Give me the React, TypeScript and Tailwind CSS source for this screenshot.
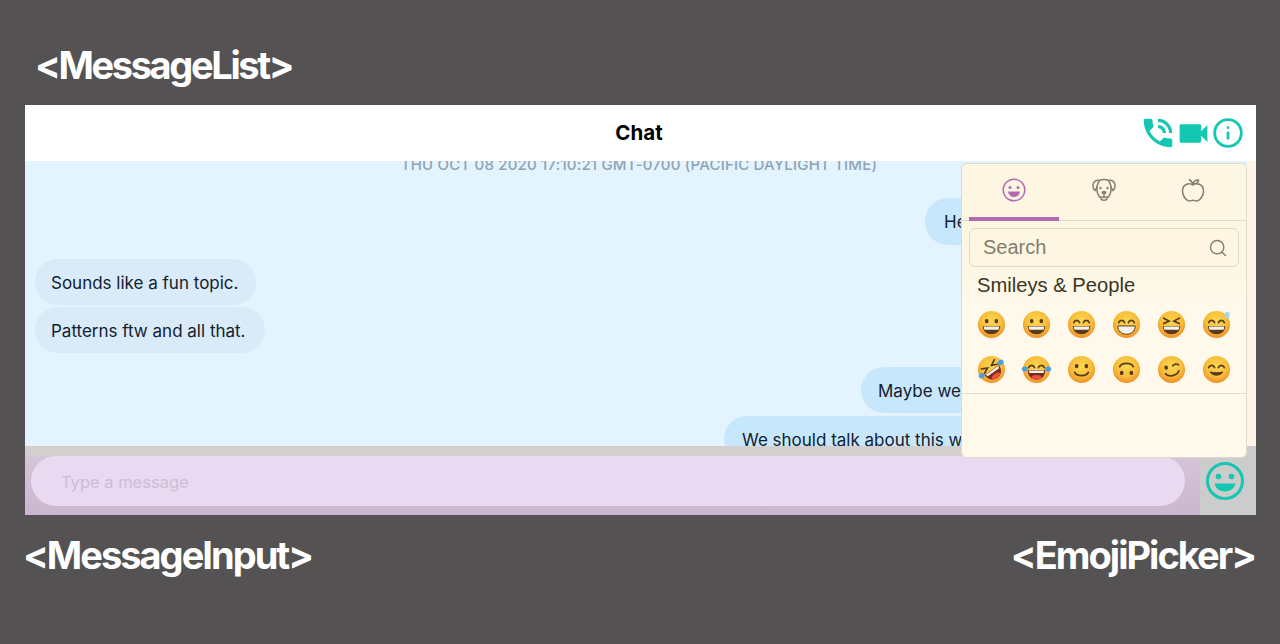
import { Info, Search } from "lucide-react";
import { MdPhoneInTalk, MdVideocam } from "react-icons/md";

type Eyes = "dot" | "arc" | "squint" | "wink";
type Mouth = "grin" | "teeth" | "smile" | "open" | "small";

interface Face {
    eyes: Eyes;
    mouth: Mouth;
    sweat?: boolean;
    tears?: boolean;
    tilt?: number;
    flip?: boolean;
}

const faces: Face[] = [
    { eyes: "dot", mouth: "grin" },
    { eyes: "dot", mouth: "grin" },
    { eyes: "arc", mouth: "grin" },
    { eyes: "arc", mouth: "teeth" },
    { eyes: "squint", mouth: "grin" },
    { eyes: "arc", mouth: "grin", sweat: true },
    { eyes: "squint", mouth: "open", tears: true, tilt: -35 },
    { eyes: "arc", mouth: "open", tears: true },
    { eyes: "dot", mouth: "smile" },
    { eyes: "dot", mouth: "smile", flip: true },
    { eyes: "wink", mouth: "smile", tilt: -12 },
    { eyes: "arc", mouth: "small" },
];

function EmojiFace({ face }: { face: Face }) {
    const brown = "#5b3a1b";
    const transform = face.flip ? "rotate(180 16 16)" : face.tilt ? `rotate(${face.tilt} 16 16)` : undefined;
    return (
        <svg viewBox="0 0 32 32" className="w-[31px] h-[31px] blur-[0.6px]">
            <circle cx="16" cy="16" r="14" fill="url(#emojiSkin)" />
            <g transform={transform}>
                {face.eyes === "dot" && (
                    <>
                        <ellipse cx="11" cy="12.5" rx="1.9" ry="2.3" fill={brown} />
                        <ellipse cx="21" cy="12.5" rx="1.9" ry="2.3" fill={brown} />
                    </>
                )}
                {face.eyes === "arc" && (
                    <path d="M8 14c1-3 5-3 6 0M18 14c1-3 5-3 6 0" fill="none" stroke={brown} strokeWidth="1.8" strokeLinecap="round" />
                )}
                {face.eyes === "squint" && (
                    <path d="M8 9.5l5.5 3-5.5 2.5M24 9.5l-5.5 3 5.5 2.5" fill="none" stroke={brown} strokeWidth="1.8" strokeLinecap="round" />
                )}
                {face.eyes === "wink" && (
                    <>
                        <ellipse cx="11" cy="13" rx="1.9" ry="2.2" fill={brown} />
                        <path d="M18 12.5c2-1.6 4.500-1.600 6 .4" fill="none" stroke={brown} strokeWidth="1.8" strokeLinecap="round" />
                    </>
                )}
                {face.mouth === "grin" && (
                    <>
                        <path d="M7 17.500h18c0 5.500-4 8.500-9 8.500s-9-3-9-8.500z" fill={brown} />
                        <path d="M8 18h16c0 2-.5 3-1 3.500H9c-.5-.5-1-1.500-1-3.500z" fill="#f4f1ea" />
                    </>
                )}
                {face.mouth === "teeth" && (
                    <path d="M7 17.500h18c0 5.500-4 8.500-9 8.500s-9-3-9-8.500z" fill="#f4f1ea" stroke={brown} strokeWidth="1" />
                )}
                {face.mouth === "smile" && (
                    <path d="M9 19c2 4.500 12 4.500 14 0" fill="none" stroke={brown} strokeWidth="1.900" strokeLinecap="round" />
                )}
                {face.mouth === "small" && (
                    <path d="M9.500 18.500c2 4.500 11 4.500 13 0-4 1-9 1-13 0z" fill={brown} stroke={brown} strokeWidth="1" strokeLinejoin="round" />
                )}
                {face.mouth === "open" && (
                    <>
                        <path d="M7 16.500h18c0 6.500-4 10-9 10s-9-3.500-9-10z" fill="#7b2b1e" />
                        <path d="M8 17h16l-.8 2.500H8.800z" fill="#f4f1ea" />
                        <ellipse cx="16" cy="24" rx="5" ry="2.300" fill="#e8513f" />
                    </>
                )}
                {face.tears && (
                    <>
                        <ellipse cx="4" cy="15.500" rx="3.200" ry="2.600" fill="#4a9fe0" />
                        <ellipse cx="28" cy="15.500" rx="3.200" ry="2.600" fill="#4a9fe0" />
                    </>
                )}
            </g>
            {face.sweat && <ellipse cx="27" cy="6.500" rx="2.600" ry="3.600" fill="#a9d8e6" />}
        </svg>
    );
}

function Smiley({ className }: { className: string }) {
    return (
        <svg viewBox="0 0 38 38" className={className}>
            <circle cx="19" cy="19" r="17.500" fill="none" stroke="currentColor" strokeWidth="3" />
            <circle cx="12.500" cy="14.500" r="2.800" fill="currentColor" />
            <circle cx="25.500" cy="14.500" r="2.800" fill="currentColor" />
            <path d="M8.500 21.500h21c-1 5-5.500 8-10.500 8s-9.500-3-10.500-8z" fill="currentColor" />
        </svg>
    );
}

function TabSmiley() {
    return (
        <svg viewBox="0 0 24 24" className="w-[24px] h-[24px] text-[#b26bb0]" fill="none" stroke="currentColor" strokeWidth="1.400">
            <circle cx="12" cy="12" r="10.800" />
            <circle cx="8" cy="9.500" r="1.500" fill="currentColor" stroke="none" />
            <circle cx="16" cy="9.500" r="1.500" fill="currentColor" stroke="none" />
            <path d="M6 13.500h12c-.5 3.500-3 5.500-6 5.500s-5.500-2-6-5.500z" fill="currentColor" stroke="none" />
        </svg>
    );
}

function TabDog() {
    return (
        <svg viewBox="0 0 24 24" className="w-[24px] h-[24px] text-[#857d6e]" fill="none" stroke="currentColor" strokeWidth="1.500" strokeLinejoin="round">
            <path d="M7.500 2.500c3-1.300 6-1.300 9 0" />
            <path d="M7.500 2.500C4 1.500 1 3.500 1 7c0 2.500 1 5 2.500 5.500L5 8.500c.5-2.500 1.500-4.500 2.500-6z" />
            <path d="M16.500 2.500c3.500-1 6.500 1 6.500 4.500 0 2.500-1 5-2.500 5.500L19 8.500c-.5-2.500-1.500-4.500-2.500-6z" />
            <path d="M5 8.500c-.8 5 1.500 10.500 4 11.500M19 8.500c.8 5-1.500 10.500-4 11.500" />
            <path d="M9 20c0 3 6 3 6 0" />
            <ellipse cx="12" cy="14.500" rx="2.600" ry="1.800" fill="currentColor" stroke="none" />
            <path d="M12 16v3M8.500 18.500c1.500 1 5.500 1 7 0" />
            <circle cx="8.500" cy="10" r="1.200" fill="currentColor" stroke="none" />
            <circle cx="15.500" cy="10" r="1.200" fill="currentColor" stroke="none" />
        </svg>
    );
}

function TabApple() {
    return (
        <svg viewBox="0 0 24 24" className="w-[24px] h-[24px] text-[#857d6e]" fill="none" stroke="currentColor" strokeWidth="1.500" strokeLinejoin="round">
            <path d="M12 7C9 4.500 1.500 5.500 1.500 13c0 5.500 4 10 7 10 1.500 0 2.200-.7 3.500-.7s2 .7 3.500.7c3 0 7-4.500 7-10C22.500 5.500 15 4.500 12 7z" />
            <path d="M12 7C11.500 4.500 10 2.500 8 1.500" />
            <path d="M12 6c.5-2.500 2.500-4 5.500-4-.3 2.500-2.500 4-5.500 4z" />
        </svg>
    );
}

export default function App() {
    const inter = "font-['Inter',sans-serif]";
    const arial = "font-['Liberation_Sans',Arial,sans-serif]";
    const labelCls = `text-white text-[38px] leading-none font-bold ${inter}`;

    return (
        <div className="w-[1280px] h-[644px] bg-[#545253] flex flex-col overflow-hidden">
            <svg width="0" height="0" className="absolute">
                <defs>
                    <radialGradient id="emojiSkin" cx="50%" cy="38%" r="62%">
                        <stop offset="0%" stopColor="#fbd752" />
                        <stop offset="60%" stopColor="#f8bf3a" />
                        <stop offset="100%" stopColor="#ee8f28" />
                    </radialGradient>
                </defs>
            </svg>

            <div className="h-[105px] pl-[35px] pt-[25px] flex items-center">
                <span className={`${labelCls} tracking-[-0.062em]`}>&lt;MessageList&gt;</span>
            </div>

            <div className={`relative ml-[25px] w-[1231px] h-[410px] flex flex-col ${inter}`}>
                {/* header */}
                <div className="relative z-10 h-[56px] bg-white flex items-center justify-center">
                    <span className="text-[20.5px] font-bold text-black pt-[1px] pr-[3px]">Chat</span>
                    <div className="absolute right-[12px] inset-y-0 flex items-center text-[#13c7b3]">
                        <MdPhoneInTalk className="w-[38px] h-[38px] -mr-[2px]" />
                        <MdVideocam className="w-[37px] h-[37px]" />
                        <Info className="w-[32px] h-[32px]" strokeWidth={2.1} />
                    </div>
                </div>

                {/* message list */}
                <div className="h-[285px] flex">
                    <div className="flex-1 bg-[#e3f4ff] overflow-hidden flex flex-col items-start text-[17px] leading-[24px] text-[#13202e]">
                        <div className="-mt-[8px] w-full shrink-0 pl-[6px] text-center text-[15px] tracking-[0.012em] leading-[24px] font-medium text-[#8ea3b4] whitespace-nowrap">
                            THU OCT 08 2020 17:10:21 GMT-0700 (PACIFIC DAYLIGHT TIME)
                        </div>
                        <div className="mt-[21px] ml-[900px] h-[47px] shrink-0 pl-[19px] pr-[24px] pt-[12px] rounded-[23px] bg-[#c6e7fc] whitespace-nowrap">
                            Hey there, got a minute?
                        </div>
                        <div className="mt-[14px] ml-[10px] h-[46px] shrink-0 pl-[16px] pr-[18px] pt-[12px] rounded-[23px] bg-[#d9ebf9] whitespace-nowrap">
                            Sounds like a fun topic.
                        </div>
                        <div className="mt-[2px] ml-[10px] h-[46px] shrink-0 pl-[16px] pr-[19px] pt-[12px] rounded-[23px] bg-[#d9ebf9] whitespace-nowrap">
                            Patterns ftw and all that.
                        </div>
                        <div className="mt-[14px] ml-[836px] h-[46px] shrink-0 px-[17px] pt-[12px] rounded-[23px] bg-[#c6e7fc] whitespace-nowrap">
                            Maybe we could start there.
                        </div>
                        <div className="mt-[3px] ml-[699px] h-[46px] shrink-0 px-[18px] pt-[12px] rounded-[23px] bg-[#c6e7fc] whitespace-nowrap">
                            We should talk about this with the team.
                        </div>
                    </div>
                    <div className="w-[9px] bg-[#fdf6e6]" />
                </div>

                {/* message input */}
                <div className="h-[69px] flex">
                    <div className="flex-1 flex flex-col">
                        <div className="h-[10px] bg-[#d3cfcd]" />
                        <div className="flex-1 bg-gradient-to-b from-[#d6c4d8] to-[#cbb6cf] pl-[6px] pr-[15px] pb-[9px]">
                            <div className="h-full rounded-[25px] bg-[#e9d9f1] pl-[30px] pt-[2px] flex items-center text-[16.5px] text-[#cdbdd6]">
                                Type a message
                            </div>
                        </div>
                    </div>
                    <div className="w-[56px] bg-[#cccccc] flex items-center justify-center pr-[6px] text-[#13c7b3]">
                        <Smiley className="w-[38px] h-[38px]" />
                    </div>
                </div>

                {/* emoji picker overlay */}
                <div className={`absolute z-20 left-[936px] top-[58px] w-[286px] h-[295px] rounded-[6px] border border-[#e0dac8] bg-[#fef9ea] flex flex-col ${arial}`}>
                    <div className="h-[57px] shrink-0 px-[7px] bg-[#fdf6e3] rounded-t-[6px] flex border-b border-[#dfd9c9]">
                        <div className="w-[90px] flex items-center justify-center pb-[1px] border-b-[4px] border-[#b26bb0] -mb-[1px]">
                            <TabSmiley />
                        </div>
                        <div className="w-[90px] flex items-center justify-center pb-[4px]">
                            <TabDog />
                        </div>
                        <div className="w-[88px] flex items-center justify-center pb-[5px]">
                            <TabApple />
                        </div>
                    </div>
                    <div className="bg-[#fdf6e3] px-[7px] pt-[7px] shrink-0">
                        <div className="h-[39px] rounded-[6px] border-[1.5px] border-[#e0d9c6] pl-[13px] pr-[10px] pb-[2px] flex items-center justify-between text-[20px] text-[#857d6e]">
                            <span>Search</span>
                            <Search className="w-[20px] h-[20px] mt-[2px]" strokeWidth={1.7} />
                        </div>
                    </div>
                    <div className="shrink-0 pl-[15px] pt-[6px] pb-[7px] bg-gradient-to-b from-[#fdf6e3] to-[#fef9ea] text-[20.2px] leading-[24px] text-[#3a3528]">
                        Smileys &amp; People
                    </div>
                    <div className="grid grid-cols-6 pl-[14px] w-[284px] shrink-0 gap-y-[14px] pt-[5px] pb-[8px] border-b border-[#e2dccb]">
                        {faces.map((f, i) => (
                            <div key={i} className="w-[31px] h-[31px] flex items-center justify-center">
                                <EmojiFace face={f} />
                            </div>
                        ))}
                    </div>
                </div>
            </div>

            <div className="flex-1 pl-[23px] pr-[25px] pb-[49px] flex items-center justify-between">
                <span className={`${labelCls} tracking-[-0.052em]`}>&lt;MessageInput&gt;</span>
                <span className={`${labelCls} tracking-[-0.052em]`}>&lt;EmojiPicker&gt;</span>
            </div>
        </div>
    );
}
